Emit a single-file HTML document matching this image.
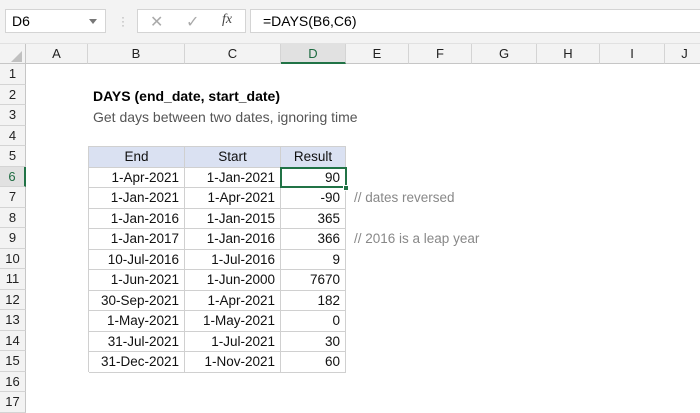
<!DOCTYPE html>
<html><head><style>
*{margin:0;padding:0;box-sizing:border-box}
body{width:700px;height:400px;overflow:hidden;background:#fff;font-family:"Liberation Sans",sans-serif;position:relative}
.a{position:absolute}
.top{left:0;top:0;width:700px;height:44px;background:#f3f3f3;border-bottom:1px solid #e1e1e1}
.ch{top:44px;height:20px;background:#f3f3f3;border-right:1px solid #d4d4d4;border-bottom:1px solid #c6c6c6;text-align:center;font-size:13px;line-height:20px;color:#222}
.rh{left:0;width:26px;background:#f3f3f3;border-bottom:1px solid #d4d4d4;border-right:1px solid #c6c6c6;text-align:center;font-size:13px;color:#222}
.c{font-size:13.5px;color:#111;border-right:1px solid #d0d0d0;border-bottom:1px solid #d0d0d0;text-align:right;padding-right:5px;white-space:nowrap}
.h{background:#dae1f2;text-align:center;padding:0}
.n{color:#888;font-size:13.5px;white-space:nowrap}
</style></head><body>
<div class="a top"></div>
<div class="a" style="left:5px;top:9px;width:101px;height:24px;background:#fff;border:1px solid #d4d4d4;font-size:14px;line-height:22px;padding-left:6px">D6<span style="position:absolute;right:8px;top:9px;border:4px solid transparent;border-top:5px solid #777"></span></div>
<div class="a" style="left:121px;top:15px;color:#aaa;font-size:12px;line-height:4px">·<br>·<br>·</div>
<div class="a" style="left:137px;top:9px;width:109px;height:24px;background:#fff;border:1px solid #d4d4d4"></div>
<div class="a" style="left:150px;top:12px;color:#aaa;font-size:16px">✕</div>
<div class="a" style="left:186px;top:12px;color:#aaa;font-size:16px">✓</div>
<div class="a" style="left:222px;top:12px;color:#444;font-size:14px;font-style:italic;font-family:'Liberation Serif',serif">fx</div>
<div class="a" style="left:250px;top:9px;width:450px;height:24px;background:#fff;border:1px solid #d4d4d4;border-right:none;font-size:14px;line-height:22px;padding-left:12px">=DAYS(B6,C6)</div>

<div class="a" style="left:0;top:44px;width:26px;height:20px;background:#f3f3f3;border-right:1px solid #c6c6c6;border-bottom:1px solid #c6c6c6"></div>
<div class="a" style="left:11px;top:51px;width:0;height:0;border-left:11px solid transparent;border-bottom:11px solid #c0c0c0"></div>
<div class="a ch" style="left:26px;width:62px">A</div>
<div class="a ch" style="left:88px;width:97px">B</div>
<div class="a ch" style="left:185px;width:96px">C</div>
<div class="a ch" style="left:281px;width:65px;background:#e1e1e1;border-bottom:2px solid #217346;color:#1e6b41">D</div>
<div class="a ch" style="left:346px;width:63px">E</div>
<div class="a ch" style="left:409px;width:63px">F</div>
<div class="a ch" style="left:472px;width:65px">G</div>
<div class="a ch" style="left:537px;width:63px">H</div>
<div class="a ch" style="left:600px;width:65px">I</div>
<div class="a ch" style="left:665px;width:40px">J</div>

<div class="a rh" style="top:64px;height:20.5px;line-height:20px">1</div>
<div class="a rh" style="top:84.5px;height:20.5px;line-height:20px">2</div>
<div class="a rh" style="top:105px;height:20.5px;line-height:20px">3</div>
<div class="a rh" style="top:125.5px;height:20.5px;line-height:20px">4</div>
<div class="a rh" style="top:146px;height:20.5px;line-height:20px">5</div>
<div class="a rh" style="top:166.5px;height:20.5px;line-height:20px;background:#e1e1e1;color:#1e6b41;border-right:2px solid #217346">6</div>
<div class="a rh" style="top:187px;height:20.5px;line-height:20px">7</div>
<div class="a rh" style="top:207.5px;height:20.5px;line-height:20px">8</div>
<div class="a rh" style="top:228px;height:20.5px;line-height:20px">9</div>
<div class="a rh" style="top:248.5px;height:20.5px;line-height:20px">10</div>
<div class="a rh" style="top:269px;height:20.5px;line-height:20px">11</div>
<div class="a rh" style="top:289.5px;height:20.5px;line-height:20px">12</div>
<div class="a rh" style="top:310px;height:20.5px;line-height:20px">13</div>
<div class="a rh" style="top:330.5px;height:20.5px;line-height:20px">14</div>
<div class="a rh" style="top:351px;height:20.5px;line-height:20px">15</div>
<div class="a rh" style="top:371.5px;height:20.5px;line-height:20px">16</div>
<div class="a rh" style="top:392px;height:20.5px;line-height:20px">17</div>

<div class="a" style="left:93px;top:86px;font-size:14px;font-weight:bold;line-height:20px">DAYS (end_date, start_date)</div>
<div class="a" style="left:93px;top:107px;font-size:14px;color:#555;line-height:20px">Get days between two dates, ignoring time</div>

<div class="a" style="left:88px;top:146px;width:258px;height:226px;border-left:1px solid #d0d0d0;border-top:1px solid #d0d0d0"></div>
<div style="position:absolute;left:89px;top:147px;width:257px;font-size:0">
<div style="display:flex;height:20.5px;line-height:19px"><div class="c h" style="width:96px">End</div><div class="c h" style="width:96px">Start</div><div class="c h" style="width:65px">Result</div></div>
<div style="display:flex;height:20.5px;line-height:19px"><div class="c" style="width:96px">1-Apr-2021</div><div class="c" style="width:96px">1-Jan-2021</div><div class="c" style="width:65px">90</div></div>
<div style="display:flex;height:20.5px;line-height:19px"><div class="c" style="width:96px">1-Jan-2021</div><div class="c" style="width:96px">1-Apr-2021</div><div class="c" style="width:65px">-90</div></div>
<div style="display:flex;height:20.5px;line-height:19px"><div class="c" style="width:96px">1-Jan-2016</div><div class="c" style="width:96px">1-Jan-2015</div><div class="c" style="width:65px">365</div></div>
<div style="display:flex;height:20.5px;line-height:19px"><div class="c" style="width:96px">1-Jan-2017</div><div class="c" style="width:96px">1-Jan-2016</div><div class="c" style="width:65px">366</div></div>
<div style="display:flex;height:20.5px;line-height:19px"><div class="c" style="width:96px">10-Jul-2016</div><div class="c" style="width:96px">1-Jul-2016</div><div class="c" style="width:65px">9</div></div>
<div style="display:flex;height:20.5px;line-height:19px"><div class="c" style="width:96px">1-Jun-2021</div><div class="c" style="width:96px">1-Jun-2000</div><div class="c" style="width:65px">7670</div></div>
<div style="display:flex;height:20.5px;line-height:19px"><div class="c" style="width:96px">30-Sep-2021</div><div class="c" style="width:96px">1-Apr-2021</div><div class="c" style="width:65px">182</div></div>
<div style="display:flex;height:20.5px;line-height:19px"><div class="c" style="width:96px">1-May-2021</div><div class="c" style="width:96px">1-May-2021</div><div class="c" style="width:65px">0</div></div>
<div style="display:flex;height:20.5px;line-height:19px"><div class="c" style="width:96px">31-Jul-2021</div><div class="c" style="width:96px">1-Jul-2021</div><div class="c" style="width:65px">30</div></div>
<div style="display:flex;height:20.5px;line-height:19px"><div class="c" style="width:96px">31-Dec-2021</div><div class="c" style="width:96px">1-Nov-2021</div><div class="c" style="width:65px">60</div></div>
</div>
<div class="a" style="left:280px;top:166.5px;width:67px;height:21.5px;border:2px solid #217346"></div>
<div class="a" style="left:343px;top:184.5px;width:6px;height:6px;background:#217346;border:1px solid #fff"></div>

<div class="a n" style="left:354px;top:188px;line-height:20px">// dates reversed</div>
<div class="a n" style="left:354px;top:229px;line-height:20px">// 2016 is a leap year</div>
</body></html>
